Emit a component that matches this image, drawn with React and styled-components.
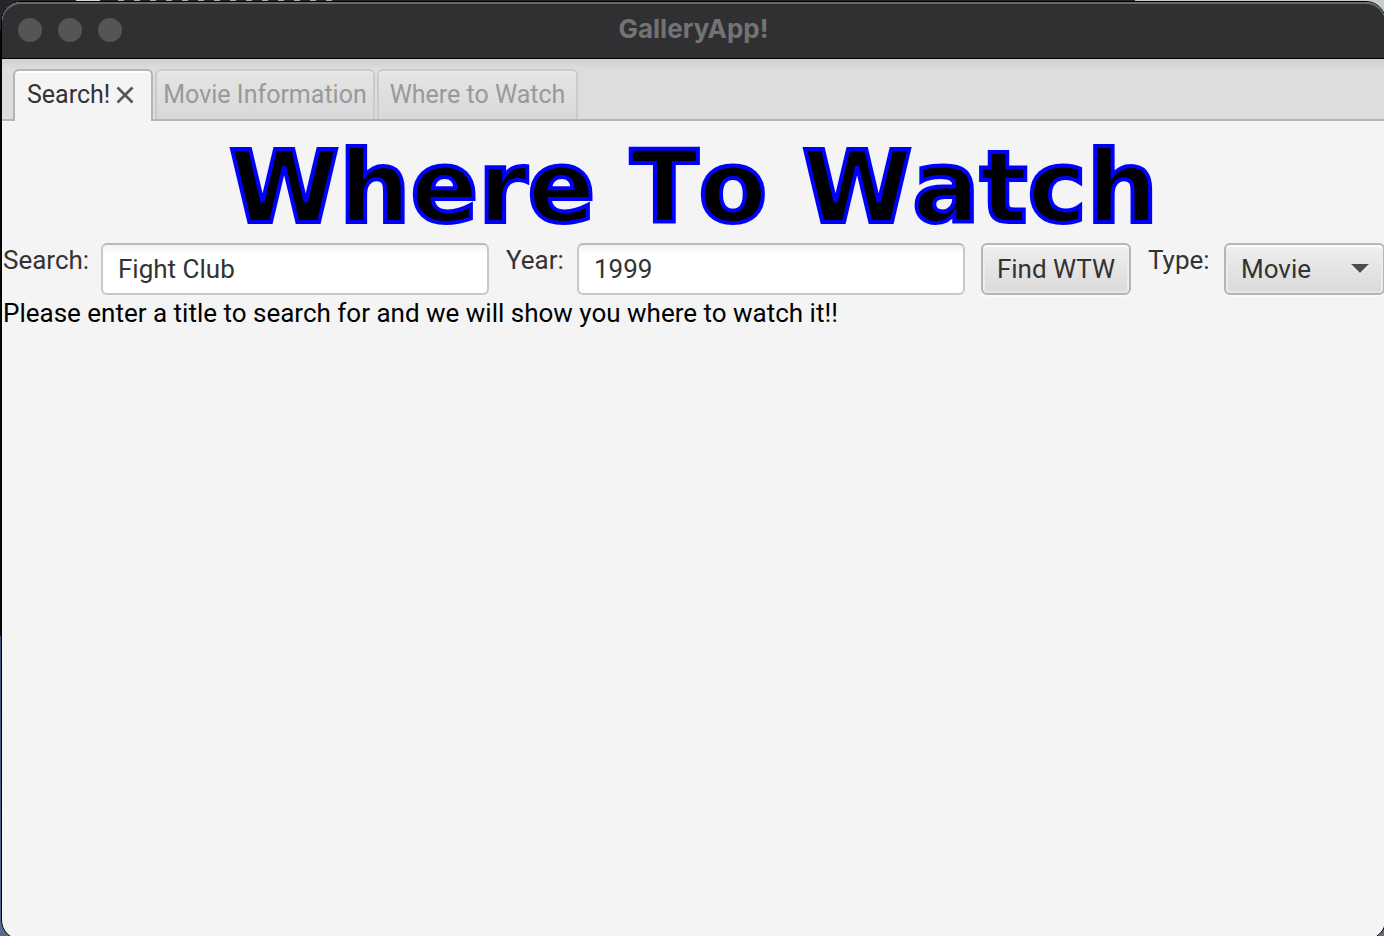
import React, { useState } from "react";
import styled, { createGlobalStyle } from "styled-components";

const GlobalStyle = createGlobalStyle`
  *, *::before, *::after { box-sizing: border-box; }
  html, body, #root { height: 100%; }
  body { margin: 0; overflow: hidden; }
  button, input, select { font: inherit; color: inherit; margin: 0; }
`;

const Desktop = styled.div`
  display: flex;
  height: 100vh;
  overflow: hidden;
  font-family: Roboto, "Liberation Sans", sans-serif;
  font-size: 26px;
  line-height: 32px;
  color: #333333;
  background:
    linear-gradient(#d8d0d2, #d8d0d2) 76px 0 / 24px 1px no-repeat,
    repeating-linear-gradient(90deg, #b0b0b0 0 6px, #26262a 6px 16px) 118px 0 / 222px 1px no-repeat,
    linear-gradient(90deg, #26262a 82%, #c4cfca 82%) top / 100% 30px no-repeat,
    linear-gradient(#08080a 68%, #3d5680 68%, #536d95);
`;

const Window = styled.main`
  flex: 1;
  display: flex;
  flex-direction: column;
  margin: 1px -2px -4px 1px;
  border: 1px solid #000000;
  border-radius: 20px;
  overflow: hidden;
  background: #f4f4f4;
`;

const TitleBar = styled.header`
  display: grid;
  grid-template-columns: 1fr auto 1fr;
  align-items: center;
  height: 57px;
  flex: none;
  padding: 0 16px;
  background: #303032;
  border-bottom: 1px solid #000000;
  border-radius: 19px 19px 0 0;
  box-shadow: inset 0 2px 0 #686868;
`;

const Lights = styled.div`
  display: flex;
  gap: 16px;
`;

const Light = styled.button`
  width: 24px;
  height: 24px;
  padding: 0;
  border: 0;
  border-radius: 50%;
  background: #555557;
`;

const WindowTitle = styled.span`
  padding-bottom: 2px;
  font-family: Inter, "Liberation Sans", sans-serif;
  font-size: 26px;
  font-weight: 700;
  color: #737375;
`;

const TabStrip = styled.div`
  display: flex;
  gap: 2px;
  height: 62px;
  flex: none;
  padding: 10px 11px 0;
  font-size: 25px;
  background:
    linear-gradient(#b5b5b5, #b5b5b5) bottom / 100% 2px no-repeat,
    linear-gradient(#cfcfcf, #dddddd 10px);
`;

const Tab = styled.div`
  display: flex;
  align-items: center;
  justify-content: ${(p) => (p.$selected ? "flex-start" : "center")};
  gap: 6px;
  width: ${(p) => p.$width}px;
  height: ${(p) => (p.$selected ? 52 : 50)}px;
  padding-left: ${(p) => (p.$selected ? 12 : 0)}px;
  padding-bottom: ${(p) => (p.$selected ? 2 : 0)}px;
  border: 2px solid ${(p) => (p.$selected ? "#b5b5b5" : "#cbcbcb")};
  border-bottom: 0;
  border-radius: 6px 6px 0 0;
  color: ${(p) => (p.$selected ? "#333333" : "#999999")};
  background: ${(p) => (p.$selected ? "#f4f4f4" : "linear-gradient(#e5e5e5, #d8d8d8)")};
  box-shadow: inset 0 2px 0 ${(p) => (p.$selected ? "#ffffff" : "#e9e9e9")};
`;

const TabLabel = styled.button`
  padding: 0;
  border: 0;
  background: none;
  white-space: nowrap;
`;

const CloseButton = styled.button`
  display: flex;
  padding: 0;
  border: 0;
  background: none;
`;

const Page = styled.section`
  flex: 1;
`;

const Heading = styled.h1`
  margin: 0;
  padding-top: 12px;
  text-align: center;
  font: 700 100px/110px "DejaVu Sans", sans-serif;
  font-kerning: none;
  color: #000000;
  -webkit-text-stroke: 4px #0000ff;
`;

const SearchForm = styled.form`
  display: grid;
  grid-template-columns: 83px 1fr 56px 1fr 150px 61px 161px;
  gap: 16px;
`;

const Label = styled.label`
  padding: 1px 0 0 1px;
  white-space: nowrap;
`;

const TextField = styled.input`
  width: 100%;
  min-width: 0;
  height: 52px;
  padding: 0 15px;
  border: 2px solid #c8c8c8;
  border-top-color: #b9b9b9;
  border-radius: 6px;
  background: linear-gradient(#f2f2f2, #ffffff 8px);
  outline: 0;
`;

const buttonFace = `
  height: 52px;
  border: 2px solid #b5b5b5;
  border-radius: 6px;
  background: linear-gradient(#f0f0f0, #d9d9d9);
  box-shadow: inset 0 2px 0 #fdfdfd, inset 2px 0 0 #ececec, inset -2px 0 0 #ececec,
    inset 0 -2px 0 #e4e4e4, 0 2px 0 #fafafa;
`;

const FindButton = styled.button`
  ${buttonFace}
  padding: 0;
  white-space: nowrap;
`;

const SelectBox = styled.div`
  display: grid;
  align-items: center;
  & > * { grid-area: 1 / 1; }
`;

const Select = styled.select`
  ${buttonFace}
  width: 100%;
  padding: 0 15px;
  appearance: none;
  outline: 0;
`;

const Arrow = styled.svg`
  justify-self: end;
  margin-right: 16px;
  pointer-events: none;
`;

const Message = styled.p`
  margin: 2px 0 0;
  padding-left: 1px;
  color: #000000;
`;

const tabs = [
  { name: "Search!", width: 140 },
  { name: "Movie Information", width: 220 },
  { name: "Where to Watch", width: 201 },
];

export default function App() {
  const [title, setTitle] = useState("Fight Club");
  const [year, setYear] = useState("1999");
  return (
    <Desktop>
      <GlobalStyle />
      <Window>
        <TitleBar>
          <Lights>
            <Light aria-label="Close" />
            <Light aria-label="Minimize" />
            <Light aria-label="Zoom" />
          </Lights>
          <WindowTitle>GalleryApp!</WindowTitle>
        </TitleBar>
        <TabStrip>
          {tabs.map((tab, i) => (
            <Tab key={tab.name} $width={tab.width} $selected={i === 0}>
              <TabLabel disabled={i > 0}>{tab.name}</TabLabel>
              {i === 0 && (
                <CloseButton aria-label="Close tab">
                  <svg width="18" height="18" viewBox="0 0 18 18" stroke="#555" strokeWidth="2.6">
                    <path d="M1.5 1.5 16.5 16.5M16.5 1.5 1.5 16.5" />
                  </svg>
                </CloseButton>
              )}
            </Tab>
          ))}
        </TabStrip>
        <Page>
          <Heading>Where To Watch</Heading>
          <SearchForm onSubmit={(e) => e.preventDefault()}>
            <Label htmlFor="title">Search:</Label>
            <TextField id="title" value={title} onChange={(e) => setTitle(e.target.value)} />
            <Label htmlFor="year">Year:</Label>
            <TextField id="year" value={year} onChange={(e) => setYear(e.target.value)} />
            <FindButton>Find WTW</FindButton>
            <Label htmlFor="type">Type:</Label>
            <SelectBox>
              <Select id="type" defaultValue="Movie">
                <option>Movie</option>
                <option>Series</option>
              </Select>
              <Arrow width="18" height="10" viewBox="0 0 18 10">
                <path d="M0 1H18L9 10Z" fill="#ffffff" />
                <path d="M0 0H18L9 9Z" fill="#4d4d4d" />
              </Arrow>
            </SelectBox>
          </SearchForm>
          <Message>Please enter a title to search for and we will show you where to watch it!!</Message>
        </Page>
      </Window>
    </Desktop>
  );
}
